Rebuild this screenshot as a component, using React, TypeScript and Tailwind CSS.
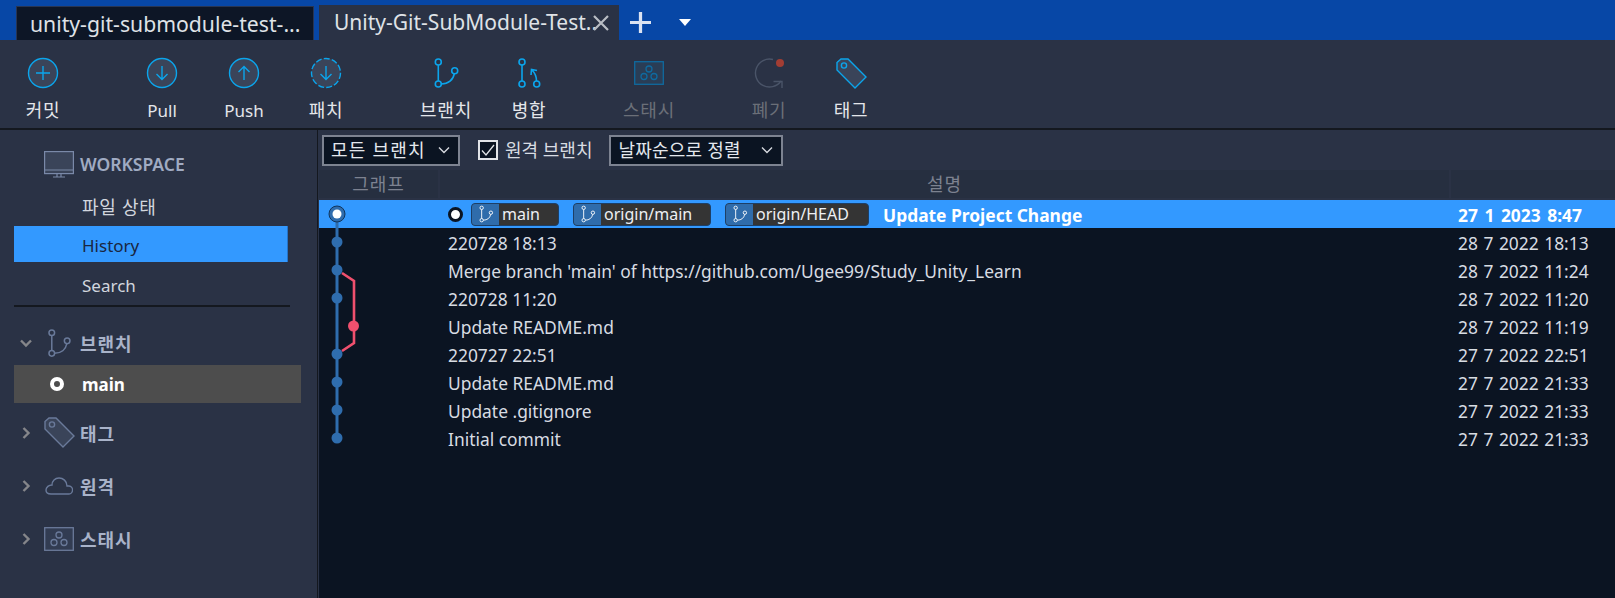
import React from "react";

const FONT = "font-['Noto_Sans','Noto_Sans_CJK_KR',sans-serif]";

const commits = [
  { text: "220728 18:13", date: "28 7 2022 18:13" },
  { text: "Merge branch 'main' of https://github.com/Ugee99/Study_Unity_Learn", date: "28 7 2022 11:24" },
  { text: "220728 11:20", date: "28 7 2022 11:20" },
  { text: "Update README.md", date: "28 7 2022 11:19" },
  { text: "220727 22:51", date: "27 7 2022 22:51" },
  { text: "Update README.md", date: "27 7 2022 21:33" },
  { text: "Update .gitignore", date: "27 7 2022 21:33" },
  { text: "Initial commit", date: "27 7 2022 21:33" },
];

function CircleIcon({ dashed, children }: { dashed?: boolean; children: React.ReactNode }) {
  return (
    <svg width="32" height="32" viewBox="0 0 32 32" fill="none" stroke="#0ba5ec" strokeWidth="1.4">
      <circle cx="16" cy="16" r="14.5" fill="#3a4459" strokeDasharray={dashed ? "6 2.2" : undefined} />
      {children}
    </svg>
  );
}

function BranchIcon({ color = "#0ba5ec", size = 32 }: { color?: string; size?: number }) {
  return (
    <svg width={size} height={size} viewBox="0 0 32 32" fill="none" stroke={color} strokeWidth="1.6">
      <circle cx="8.300" cy="5" r="3" />
      <circle cx="8.300" cy="27" r="3" />
      <circle cx="24.700" cy="13.700" r="3" />
      <path d="M8.300 8v16M11.300 27c7 0 12-4 13-10.300" />
    </svg>
  );
}

function MergeIcon() {
  return (
    <svg width="32" height="32" viewBox="0 0 32 32" fill="none" stroke="#0ba5ec" strokeWidth="1.6">
      <circle cx="9" cy="5" r="3" />
      <circle cx="9" cy="27" r="3" />
      <circle cx="23.700" cy="27" r="3" />
      <path d="M9 8v16M23.500 24c0-4-1.500-8-4.500-11M18 18l.5-5.500 5.500 1" />
    </svg>
  );
}

function StashIcon({ color, fill, w = 30, h = 24 }: { color: string; fill: string; w?: number; h?: number }) {
  return (
    <svg width={w} height={h} viewBox="0 0 30 24" fill="none" stroke={color} strokeWidth="1.3">
      <rect x="0.7" y="0.7" width="28.6" height="22.6" fill={fill} />
      <circle cx="15" cy="8" r="3" />
      <circle cx="10" cy="15.5" r="3" />
      <circle cx="20" cy="15.5" r="3" />
    </svg>
  );
}

function TagIcon({ color, fill }: { color: string; fill: string }) {
  return (
    <svg width="31" height="31" viewBox="0 0 31 31" fill="none" stroke={color} strokeWidth="1.4">
      <path d="M1 4.5 5 1h7l18 18-11 11L1 12z" fill={fill} />
      <circle cx="8" cy="7.5" r="2.6" />
    </svg>
  );
}

function DiscardIcon() {
  return (
    <svg width="32" height="32" viewBox="0 0 32 32" fill="none" stroke="#4a5468" strokeWidth="1.4">
      <path d="M20 2.500A14 14 0 1 0 28 24" />
      <path d="M20.500 24.500H29V31" />
      <circle cx="27" cy="6" r="4" fill="#a23d33" stroke="none" />
    </svg>
  );
}

function ToolButton({
  label,
  icon,
  className = "",
  muted,
  latin,
}: {
  label: string;
  icon: React.ReactNode;
  className?: string;
  muted?: boolean;
  latin?: boolean;
}) {
  return (
    <div className={`flex w-[82px] flex-col items-center ${className}`}>
      <div className="flex h-[32px] items-center justify-center">{icon}</div>
      <span
        className={`leading-[26px] ${latin ? "mt-[9px] text-[17px]" : "mt-[8px] text-[18px] tracking-[0.7px]"} ${
          muted ? "text-[#6b6f78]" : "text-[#e4e6ea]"
        }`}
      >
        {label}
      </span>
    </div>
  );
}

function Chevron({ open }: { open?: boolean }) {
  return (
    <svg width="14" height="14" viewBox="0 0 14 14" fill="none" stroke="#85868a" strokeWidth="2.4">
      {open ? <path d="M2 4.5 7 9.5l5-5" /> : <path d="M4.500 2 9.500 7l-5 5" />}
    </svg>
  );
}

function SectionHeader({ label, icon, open }: { label: string; icon: React.ReactNode; open?: boolean }) {
  return (
    <div className="flex h-[30px] items-center pl-[19px]">
      <Chevron open={open} />
      <div className="ml-[10px] flex w-[32px] justify-center">{icon}</div>
      <span className="ml-[5px] pt-[3px] text-[18px] font-bold tracking-[1px] text-[#a9b3c9]">{label}</span>
    </div>
  );
}

function Select({ label, className }: { label: string; className: string }) {
  return (
    <div
      className={`flex h-[31px] items-center justify-between border-2 border-[#7d8391] bg-[#0b1422] pl-[7px] pr-[8px] text-[18px] text-[#e4e8ee] ${className}`}
    >
      <span>{label}</span>
      <svg width="12" height="8" viewBox="0 0 12 8" fill="none" stroke="#d5d8de" strokeWidth="1.4">
        <path d="M1 1.500 6 6.500l5-5" />
      </svg>
    </div>
  );
}

function Badge({ label, width }: { label: string; width: string }) {
  return (
    <div className={`flex h-[23px] items-center overflow-hidden rounded-[4px] border border-[#1d3f66] bg-[#343434] ${width}`}>
      <div className="flex h-full w-[27px] shrink-0 items-center justify-center bg-[#2f6cab]">
        <BranchIcon color="#ffffff" size={18} />
      </div>
      <span className="ml-[3px] whitespace-nowrap text-[16px] font-normal text-[#eef0f3]">{label}</span>
    </div>
  );
}

function Graph() {
  const blue = "#2f6dae";
  const pink = "#f0506e";
  const nodes = [242, 270, 298, 354, 382, 410, 438];
  return (
    <svg className="absolute left-0 top-0" width="60" height="250" viewBox="319 200 60 250" fill="none">
      <path d="M337 214V438" stroke={blue} strokeWidth="3" />
      <path d="M342 273 354 281V343L342 351" stroke={pink} strokeWidth="2.6" />
      <circle cx="337" cy="214" r="8" fill="#2f6dae" stroke="#10345c" strokeWidth="1" />
      <circle cx="337" cy="214" r="4.5" fill="#ffffff" />
      {nodes.map((y) => (
        <circle key={y} cx="337" cy={y} r="5.5" fill={blue} />
      ))}
      <circle cx="353.500" cy="326" r="5.5" fill={pink} />
    </svg>
  );
}

export default function App() {
  return (
    <div className={`flex h-screen w-full flex-col overflow-hidden bg-[#2a3245] ${FONT}`}>
      {/* tabs */}
      <div className="flex h-[40px] shrink-0 items-end bg-[#0747a6] pl-[16px]">
        <div className="flex h-[34px] w-[298px] items-center border border-b-0 border-[#283552] bg-[#0d1626] pl-[13px] text-[21.2px] text-[#dfe2e7]">
          unity-git-submodule-test-...
        </div>
        <div className="relative ml-[5px] flex h-[35px] w-[300px] items-center bg-[#2a3245] pl-[15px] text-[21px] text-[#dfe2e7]">
          <span className="w-[259px] whitespace-nowrap">Unity-Git-SubModule-Test..</span>
          <svg className="relative" width="16" height="16" viewBox="0 0 16 16" stroke="#b9bdc4" strokeWidth="2.2">
            <path d="M1 1l14 14M15 1 1 15" />
          </svg>
        </div>
        <svg className="mb-[7px] ml-[11px]" width="21" height="21" viewBox="0 0 22 22" stroke="#dbe3f2" strokeWidth="3.4">
          <path d="M11 0v22M0 11h22" />
        </svg>
        <svg className="mb-[14px] ml-[28px]" width="12" height="7" viewBox="0 0 12 7" fill="#ffffff">
          <path d="M0 0h12L6 7z" />
        </svg>
      </div>

      {/* toolbar */}
      <div className="flex h-[90px] shrink-0 border-b-2 border-[#14181f] px-[2px] pt-[17px]">
        <ToolButton
          label="커밋"
          icon={
            <CircleIcon>
              <path d="M16 9v14M9 16h14" />
            </CircleIcon>
          }
        />
        <ToolButton
          latin
          className="ml-[37px]"
          label="Pull"
          icon={
            <CircleIcon>
              <path d="M16 9v13M10.500 17l5.500 5.500 5.500-5.500" />
            </CircleIcon>
          }
        />
        <ToolButton
          latin
          label="Push"
          icon={
            <CircleIcon>
              <path d="M16 23V10M10.500 15l5.500-5.500 5.500 5.500" />
            </CircleIcon>
          }
        />
        <ToolButton
          label="패치"
          icon={
            <CircleIcon dashed>
              <path d="M16 9v13M10.500 17l5.500 5.500 5.500-5.500" />
            </CircleIcon>
          }
        />
        <ToolButton className="ml-[38px]" label="브랜치" icon={<BranchIcon />} />
        <ToolButton className="ml-[1px]" label="병합" icon={<MergeIcon />} />
        <ToolButton className="ml-[38px]" muted label="스태시" icon={<StashIcon color="#0f6a9f" fill="#2a3d55" />} />
        <ToolButton className="ml-[38px]" muted label="폐기" icon={<DiscardIcon />} />
        <ToolButton label="태그" icon={<TagIcon color="#0ba5ec" fill="#3a4459" />} />
      </div>

      <div className="flex min-h-0 flex-1">
        {/* sidebar */}
        <div className="flex w-[318px] shrink-0 flex-col border-r border-[#14181f] pt-[13px]">
          <div className="flex h-[45px] items-center pb-[2px] pl-[44px]">
            <svg width="30" height="27" viewBox="0 0 30 27" fill="#3a4459" stroke="#7a89a8" strokeWidth="1.2">
              <rect x="0.6" y="0.6" width="28.800" height="22" />
              <path d="M1 19h28M9 26h12M13 23v3M17 23v3" />
            </svg>
            <span className="ml-[6px] text-[17.5px] font-semibold text-[#a0abc2]">WORKSPACE</span>
          </div>
          <div className="flex h-[38px] items-center pl-[82px] text-[18px] tracking-[0.7px] text-[#d2d6de]">파일 상태</div>
          <div className="ml-[14px] flex h-[36px] w-[274px] items-center border-r border-[#2574c9] bg-[#3399ff] pl-[68px] pt-[4px] text-[17px] text-[#1a2640]">
            History
          </div>
          <div className="flex h-[43px] items-center pl-[82px] pt-[5px] text-[17px] text-[#d2d6de]">Search</div>
          <div className="ml-[14px] h-[1.5px] w-[276px] bg-[#14181f]" />
          <div className="mt-[21px]">
            <SectionHeader open label="브랜치" icon={<BranchIcon color="#6a7a9a" size={30} />} />
          </div>
          <div className="ml-[14px] mt-[7px] flex h-[38px] w-[287px] items-center bg-[#4d4d4d] pl-[36px] text-[17px] font-bold text-white">
            <span className="h-[14px] w-[14px] rounded-full border-[4px] border-white" />
            <span className="ml-[18px] pt-[3px]">main</span>
          </div>
          <div className="mt-[15px]">
            <SectionHeader label="태그" icon={<TagIcon color="#6a7a9a" fill="#3a4459" />} />
          </div>
          <div className="mt-[23px]">
            <SectionHeader
              label="원격"
              icon={
                <svg width="28" height="18" viewBox="0 0 28 18" fill="none" stroke="#6a7a9a" strokeWidth="1.4">
                  <path d="M6 17h17a4 4 0 0 0 1-8c-1 0-2 0-2 0 0-5-4-8-8-8s-7 3-7 7c-3 0-6 2-6 5s2 4 5 4z" />
                </svg>
              }
            />
          </div>
          <div className="mt-[23px]">
            <SectionHeader label="스태시" icon={<StashIcon color="#6a7a9a" fill="#323c52" />} />
          </div>
        </div>

        {/* history */}
        <div className="flex min-w-0 flex-1 flex-col">
          <div className="flex h-[38px] shrink-0 items-center pl-[4px] pt-[2px]">
            <Select label="모든 브랜치" className="w-[138px] tracking-[1.2px]" />
            <div className="ml-[18px] flex h-[20px] w-[20px] items-center justify-center border-2 border-[#e2e4e8] bg-[#0b1422]">
              <svg width="14" height="12" viewBox="0 0 14 12" fill="none" stroke="#e2e4e8" strokeWidth="1.3">
                <path d="M1 6.500l4 4.500L13 1" />
              </svg>
            </div>
            <span className="ml-[7px] text-[18px] text-[#d8dce2]">원격 브랜치</span>
            <Select label="날짜순으로 정렬" className="ml-[17px] w-[174px] tracking-[0.2px]" />
          </div>

          <div className="mt-[2px] flex h-[28px] shrink-0 text-[18px] text-[#7d8290]">
            <div className="ml-[1px] flex w-[119px] items-center justify-center bg-[#262f40] tracking-[1px]">그래프</div>
            <div className="ml-[2px] flex w-[1009px] items-center justify-center bg-[#262f40] tracking-[1px]">설명</div>
            <div className="ml-[2px] flex-1 bg-[#262f40]" />
          </div>

          <div className="relative ml-[1px] mt-[2px] flex-1 bg-[#0b1422] text-[17.4px] text-[#d8dce2]">
            <div className="flex h-[28px] items-center bg-[#3399ff] font-bold text-white">
              <span className="ml-[129px] h-[15px] w-[15px] shrink-0 rounded-full border-[3px] border-[#0b1422] bg-white" />
              <div className="ml-[8px] flex items-center gap-[14px]">
                <Badge label="main" width="w-[88px]" />
                <Badge label="origin/main" width="w-[138px]" />
                <Badge label="origin/HEAD" width="w-[144px]" />
              </div>
              <span className="ml-[14px] w-[575px] whitespace-nowrap pt-[2px]">Update Project Change</span>
              <span className="whitespace-nowrap pt-[2px] [word-spacing:2px]">27 1 2023 8:47</span>
            </div>
            {commits.map((c, i) => (
              <div key={i} className="flex h-[28px] items-center pt-[2px]">
                <span className="ml-[129px] w-[1010px] whitespace-nowrap">{c.text}</span>
                <span className="whitespace-nowrap [word-spacing:1px]">{c.date}</span>
              </div>
            ))}
            <Graph />
          </div>
        </div>
      </div>
    </div>
  );
}
